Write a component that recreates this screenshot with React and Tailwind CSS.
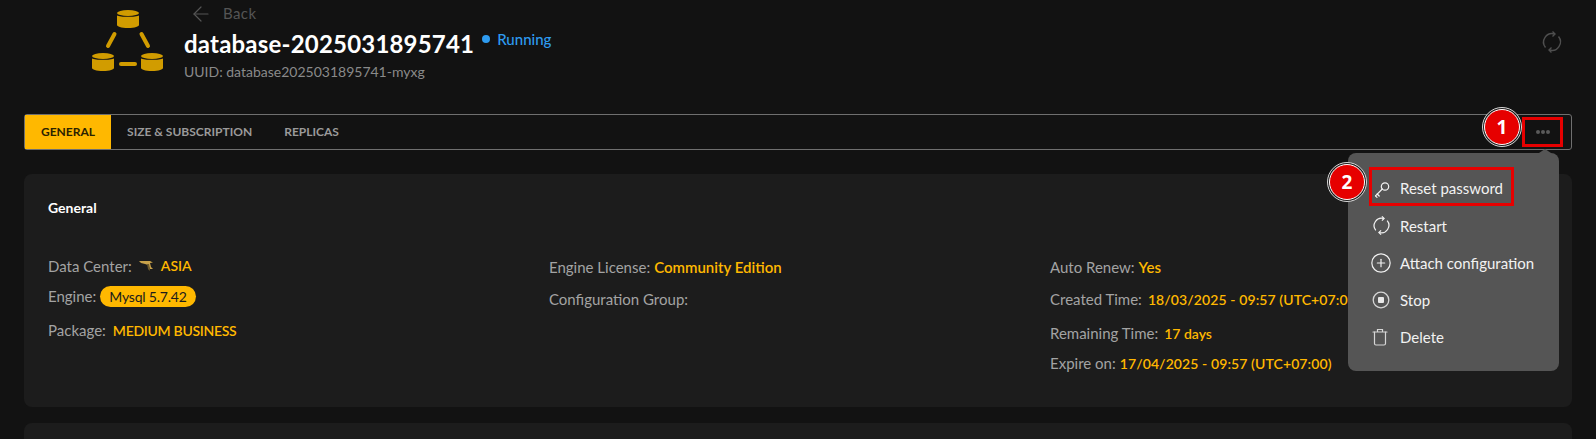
import { ArrowLeft, CirclePlus } from 'lucide-react';

const DbIcon = ({ x, y }) => (
  <g transform={`translate(${x} ${y})`} fill="#d19c00">
    <ellipse cx="11" cy="3" rx="11" ry="3" />
    <path d="M0 5.500c3 1.800 19 1.800 22 0V15c0 1.500-4 3-11 3S0 16.500 0 15z" />
  </g>
);

const Logo = () => (
  <svg width="72" height="62" viewBox="0 0 72 62" className="shrink-0">
    <DbIcon x={25} y={0} />
    <DbIcon x={0} y={43} />
    <DbIcon x={49} y={43} />
    <g stroke="#d19c00" strokeWidth="4" strokeLinecap="round">
      <path d="M22.500 24 16 36" />
      <path d="M49.500 24 56 36" />
      <path d="M29 54h14" />
    </g>
  </svg>
);

const RestartIcon = ({ className }) => (
  <svg viewBox="0 0 24 24" fill="none" stroke="currentColor" strokeWidth="1.400" className={className}>
    <path d="M5.500 17.500A8.500 8.500 0 0 1 14.500 4" />
    <path d="M18.500 6.500A8.500 8.500 0 0 1 9.500 20" />
    <path d="m12.500 1.500 2.500 2.500-2.500 2.500" />
    <path d="m11.500 17.500-2.500 2.500 2.500 2.500" />
  </svg>
);

const KeyIcon = () => (
  <svg viewBox="0 0 20 20" className="w-5 h-5" fill="none" stroke="currentColor" strokeWidth="1.200" strokeLinecap="round">
    <circle cx="13" cy="7.500" r="3.700" />
    <path d="M10.300 10 3.500 16.800" />
    <path d="m5.200 15 2 2" />
    <path d="m3.500 16.800 1.500 1.500" />
  </svg>
);

const StopIcon = () => (
  <svg viewBox="0 0 20 20" className="w-[20px] h-[20px] -ml-[1px]" fill="none" stroke="#d6d6d6" strokeWidth="1.300">
    <circle cx="10" cy="10" r="7.800" />
    <rect x="7" y="7" width="6" height="6" rx="1" fill="#e8e8e8" stroke="none" />
  </svg>
);

const TrashIcon = () => (
  <svg viewBox="0 0 16 18" className="w-4 h-[18px]" fill="none" stroke="#d6d6d6" strokeWidth="1.200" strokeLinecap="round">
    <path d="M1 4h14" />
    <path d="M5.500 3.500V1.500h5v2" />
    <path d="M2.500 4v11.500a1.500 1.500 0 0 0 1.500 1.500h8a1.500 1.500 0 0 0 1.500-1.500V4" />
  </svg>
);

const Flag = () => (
  <svg width="14" height="10" viewBox="0 0 14 10" className="ml-[7px] mr-2 -mt-[1px]">
    <path d="M0 0h11l3 1.500-3 .5 1 4 2 2h-3L9 4 6 3 2 2z" fill="#c9a24a" />
    <path d="M8 3l1 5 1.500 2 .5-2-1-5z" fill="#6d5a2c" />
  </svg>
);

const Row = ({ label, className, children }) => (
  <div className={`flex items-center h-5 text-[15px] text-[#a3a3a3] ${className || ''}`}>
    <span>{label}</span>
    {children}
  </div>
);

const Value = ({ className, children }) => (
  <span className={`ml-1 font-semibold text-[14px] text-[#ffb800] ${className || ''}`}>{children}</span>
);

const menuItems = [
  { label: 'Reset password', icon: <KeyIcon /> },
  { label: 'Restart', icon: <RestartIcon className="w-[21px] h-[21px] -ml-[1px]" /> },
  { label: 'Attach configuration', icon: <CirclePlus size={22} strokeWidth={1.300} className="-ml-[2px]" /> },
  { label: 'Stop', icon: <StopIcon /> },
  { label: 'Delete', icon: <TrashIcon /> },
];

const Marker = ({ n, className }) => (
  <div className={`absolute w-10 h-10 rounded-full border border-[#d8d8d8] bg-[#1c1c1c] flex items-center justify-center ${className}`}>
    <div className="w-[36px] h-[36px] rounded-full border-[1.500px] border-white bg-[#e60000] flex items-center justify-center text-white text-[19px] font-bold font-['Open_Sans',sans-serif]">
      {n}
    </div>
  </div>
);

export default function App() {
  return (
    <div className="w-[1596px] h-[439px] overflow-hidden bg-[#121212] font-['Lato',sans-serif] px-6">
      <div className="flex h-[114px]">
        <div className="pl-[68px] pt-[10px]">
          <Logo />
        </div>
        <div className="pl-5">
          <div className="flex items-center h-[27px] pl-[5px] text-[15px] text-[#555]">
            <ArrowLeft size={24} strokeWidth={1.200} />
            <span className="ml-[10px] tracking-[0.4px]">Back</span>
          </div>
          <div className="flex items-center h-[34px]">
            <span className="text-[24px] font-bold text-white tracking-[0.2px]">database-2025031895741</span>
            <span className="ml-2 mb-[10px] w-2 h-2 rounded-full bg-[#2e9bf0]" />
            <span className="ml-[7px] mb-[10px] text-[15px] font-medium text-[#2e9bf0]">Running</span>
          </div>
          <div className="text-[14px] text-[#8a8a8a]">UUID: database2025031895741-myxg</div>
        </div>
        <RestartIcon className="w-6 h-6 ml-auto mt-[30px] mr-2 text-[#4f4f4f]" />
      </div>

      <div className="relative">
        <div className="flex items-center h-[36px] border border-[#6f6f6f] rounded-[3px]">
          <div className="flex items-center h-full px-4 bg-[#ffb800] text-[#2a2200] text-[12px] font-bold">GENERAL</div>
          <div className="px-4 text-[12px] font-bold text-[#9a9a9a]">SIZE &amp; SUBSCRIPTION</div>
          <div className="px-4 text-[12px] font-bold text-[#9a9a9a]">REPLICAS</div>
          <div className="ml-auto mr-[8px] w-[41px] h-[30px] border-[3px] border-[#e60000] flex items-center justify-center gap-[1px]">
            <span className="w-1 h-1 rounded-full bg-[#5a5a5a]" />
            <span className="w-1 h-1 rounded-full bg-[#5a5a5a]" />
            <span className="w-1 h-1 rounded-full bg-[#5a5a5a]" />
          </div>
        </div>

        <div className="mt-6 h-[233px] rounded-lg bg-[#1c1c1c] px-6 pt-[23px]">
          <div className="text-[14px] font-bold text-white">General</div>
          <div className="grid grid-cols-3 mt-[39px]">
            <div className="-mt-[1px]">
              <Row label="Data Center:">
                <Flag />
                <span className="-mt-[2px] font-semibold text-[14px] text-[#ffb800]">ASIA</span>
              </Row>
              <Row label="Engine:" className="mt-[10px]">
                <span className="ml-1 px-[9px] h-[21px] flex items-center rounded-full bg-[#ffb800] text-[14px] tracking-[-0.2px] text-[#1c1c1c]">Mysql 5.7.42</span>
              </Row>
              <Row label="Package:" className="mt-[14px]">
                <Value className="ml-[7px] tracking-[-0.3px]">MEDIUM BUSINESS</Value>
              </Row>
            </div>
            <div className="pl-[1px]">
              <Row label="Engine License:"><Value className="text-[15px]">Community Edition</Value></Row>
              <Row label="Configuration Group:" className="mt-3" />
            </div>
            <div className="pl-[2px]">
              <Row label="Auto Renew:"><Value className="text-[15px]">Yes</Value></Row>
              <Row label="Created Time:" className="mt-3"><Value className="ml-[6px] tracking-[0.1px]">18/03/2025 - 09:57 (UTC+07:00)</Value></Row>
              <Row label="Remaining Time:" className="mt-[14px]"><Value className="ml-[6px]">17 days</Value></Row>
              <Row label="Expire on:" className="mt-[10px]"><Value className="tracking-[0.1px]">17/04/2025 - 09:57 (UTC+07:00)</Value></Row>
            </div>
          </div>
        </div>
        <div className="mt-4 h-[40px] rounded-lg bg-[#1c1c1c]" />

        <div className="absolute right-[13px] top-[39px] w-[211px] h-[218px] rounded-lg bg-[#555] py-[17px] pl-[24px] text-[15px] text-[#f2f2f2]">
          <div className="absolute right-[8px] -top-[4px] w-0 h-0 border-x-[6px] border-x-transparent border-b-[4px] border-b-[#555]" />
          {menuItems.map((item) => (
            <div key={item.label} className="flex items-center h-[37.200px]">
              <span className="w-[28px] flex items-center justify-start">{item.icon}</span>
              <span>{item.label}</span>
            </div>
          ))}
          <div className="absolute left-[21px] top-[14px] w-[145px] h-[39px] border-[3px] border-[#e60000]" />
        </div>

        <Marker n="1" className="left-[1458px] -top-[7px]" />
        <Marker n="2" className="left-[1303px] top-[48px]" />
      </div>
    </div>
  );
}
